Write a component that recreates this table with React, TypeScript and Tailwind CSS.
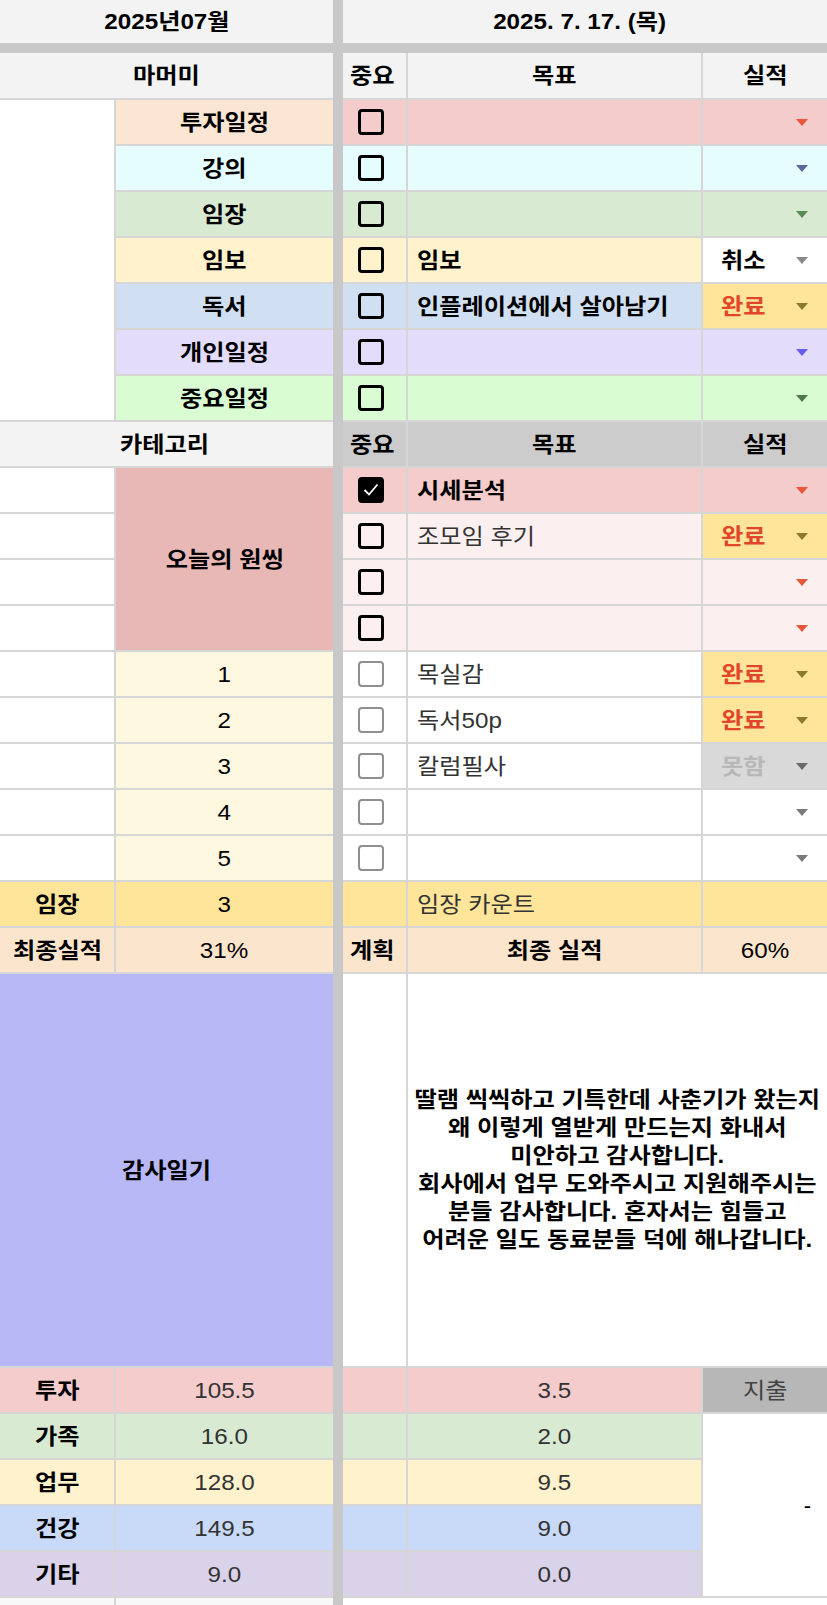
import React from "react";

const T = ({ children, left = false }: { children: React.ReactNode; left?: boolean }) => (
  <span className={left ? "inline-block scale-x-110 origin-left whitespace-nowrap" : "inline-block scale-x-110 whitespace-nowrap"}>
    {children}
  </span>
);

const Arrow = ({ c }: { c: string }) => (
  <svg width="12" height="7" viewBox="0 0 12 7" className="shrink-0">
    <path d="M0 0H12L6 7Z" fill={c} />
  </svg>
);

const Box = ({ checked = false, gray = false }: { checked?: boolean; gray?: boolean }) => (
  <div
    className={
      gray
        ? "w-[26px] h-[26px] rounded-[4px] border-[2.5px] border-[#8f8f8f] bg-white"
        : checked
        ? "w-[26px] h-[26px] rounded-[4px] border-[3px] border-black bg-black flex items-center justify-center"
        : "w-[26px] h-[26px] rounded-[4px] border-[3px] border-black"
    }
  >
    {checked && (
      <svg width="18" height="16" viewBox="0 0 18 16">
        <path d="M2.5 8 L7 12.5 L15.5 2.5" fill="none" stroke="white" strokeWidth="1.8" />
      </svg>
    )}
  </div>
);

type Res = { text: string; cls: string; bg: string } | null;

const topRows: { label: string; lbg: string; rbg: string; goal: string; res: Res; arrow: string }[] = [
  { label: "투자일정", lbg: "bg-[#fae6d3]", rbg: "bg-[#f4cccc]", goal: "", res: null, arrow: "#e8553a" },
  { label: "강의", lbg: "bg-[#e6fdff]", rbg: "bg-[#e6fdff]", goal: "", res: null, arrow: "#5b6796" },
  { label: "임장", lbg: "bg-[#d9ead3]", rbg: "bg-[#d9ead3]", goal: "", res: null, arrow: "#5a8a55" },
  {
    label: "임보",
    lbg: "bg-[#fff2cc]",
    rbg: "bg-[#fff2cc]",
    goal: "임보",
    res: { text: "취소", cls: "text-black font-bold", bg: "bg-white" },
    arrow: "#8a8a8a",
  },
  {
    label: "독서",
    lbg: "bg-[#d0e0f2]",
    rbg: "bg-[#d0e0f2]",
    goal: "인플레이션에서 살아남기",
    res: { text: "완료", cls: "text-[#e2452c] font-bold", bg: "bg-[#ffe599]" },
    arrow: "#8c7b2e",
  },
  { label: "개인일정", lbg: "bg-[#e3dcfb]", rbg: "bg-[#e3dcfb]", goal: "", res: null, arrow: "#6a5cf0" },
  { label: "중요일정", lbg: "bg-[#d9fcd2]", rbg: "bg-[#d9fcd2]", goal: "", res: null, arrow: "#4f7a4f" },
];

const oneRows: { bg: string; goal: string; bold: boolean; checked: boolean; res: Res; arrow: string }[] = [
  { bg: "bg-[#f4cccc]", goal: "시세분석", bold: true, checked: true, res: null, arrow: "#e8553a" },
  {
    bg: "bg-[#fcefef]",
    goal: "조모임 후기",
    bold: false,
    checked: false,
    res: { text: "완료", cls: "text-[#e2452c] font-bold", bg: "bg-[#ffe599]" },
    arrow: "#8c7b2e",
  },
  { bg: "bg-[#fcefef]", goal: "", bold: false, checked: false, res: null, arrow: "#e8553a" },
  { bg: "bg-[#fcefef]", goal: "", bold: false, checked: false, res: null, arrow: "#e8553a" },
];

const numRows: { n: string; goal: string; res: Res; arrow: string }[] = [
  { n: "1", goal: "목실감", res: { text: "완료", cls: "text-[#e2452c] font-bold", bg: "bg-[#ffe599]" }, arrow: "#8c7b2e" },
  { n: "2", goal: "독서50p", res: { text: "완료", cls: "text-[#e2452c] font-bold", bg: "bg-[#ffe599]" }, arrow: "#8c7b2e" },
  { n: "3", goal: "칼럼필사", res: { text: "못함", cls: "text-[#b8b8b8] font-bold", bg: "bg-[#d9d9d9]" }, arrow: "#6a6a6a" },
  { n: "4", goal: "", res: null, arrow: "#7a7a7a" },
  { n: "5", goal: "", res: null, arrow: "#7a7a7a" },
];

const stats: { label: string; bg: string; v: string; p: string }[] = [
  { label: "투자", bg: "bg-[#f4cccc]", v: "105.5", p: "3.5" },
  { label: "가족", bg: "bg-[#d9ead3]", v: "16.0", p: "2.0" },
  { label: "업무", bg: "bg-[#fff2cc]", v: "128.0", p: "9.5" },
  { label: "건강", bg: "bg-[#c9daf8]", v: "149.5", p: "9.0" },
  { label: "기타", bg: "bg-[#d9d2e9]", v: "9.0", p: "0.0" },
];

const ResCell = ({ res, arrow, bg }: { res: Res; arrow: string; bg: string }) => (
  <div className={`flex items-center justify-between pl-[18px] pr-[19px] ${res ? res.bg : bg}`}>
    <span className={res ? res.cls : ""}>{res ? <T left>{res.text}</T> : ""}</span>
    <Arrow c={arrow} />
  </div>
);

const ROWS = "grid-rows-[45px_repeat(19,44px)_392px_repeat(6,44px)]";

export default function App() {
  return (
    <div className="w-[827px] bg-[#c8c8c8] text-[22px] text-black font-['Liberation_Sans','Noto_Sans_CJK_KR',sans-serif] overflow-hidden">
      {/* Top header */}
      <div className="flex gap-[10px] pb-[10px]">
        <div className="w-[333px] h-[43px] bg-[#f3f3f3] flex items-center justify-center font-bold">
          <T>2025년07월</T>
        </div>
        <div className="w-[484px] h-[43px] bg-[#f3f3f3] flex items-center justify-center font-bold pr-[10px]">
          <T>2025. 7. 17. (목)</T>
        </div>
      </div>

      <div className="flex gap-[10px]">
        {/* Left grid */}
        <div className={`grid w-[333px] grid-cols-[114px_217px] gap-[2px] bg-[#d6d6d6] ${ROWS}`}>
          <div className="col-span-2 bg-[#f3f3f3] flex items-center justify-center font-bold">
            <T>마머미</T>
          </div>
          <div className="row-span-7 bg-white" />
          {topRows.map((r) => (
            <div key={r.label} className={`${r.lbg} flex items-center justify-center font-bold`}>
              <T>{r.label}</T>
            </div>
          ))}
          <div className="col-span-2 bg-[#f3f3f3] flex items-center pl-[120px] font-bold">
            <T left>카테고리</T>
          </div>
          <div className="bg-white" />
          <div className="row-span-4 bg-[#e8b8b7] flex items-center justify-center font-bold">
            <T>오늘의 원씽</T>
          </div>
          <div className="bg-white" />
          <div className="bg-white" />
          <div className="bg-white" />
          {numRows.map((r) => (
            <React.Fragment key={r.n}>
              <div className="bg-white" />
              <div className="bg-[#fff8e1] flex items-center justify-center">
                <T>{r.n}</T>
              </div>
            </React.Fragment>
          ))}
          <div className="bg-[#ffe599] flex items-center justify-center font-bold">
            <T>임장</T>
          </div>
          <div className="bg-[#ffe599] flex items-center justify-center">
            <T>3</T>
          </div>
          <div className="bg-[#fce5cd] flex items-center justify-center font-bold">
            <T>최종실적</T>
          </div>
          <div className="bg-[#fce5cd] flex items-center justify-center">
            <T>31%</T>
          </div>
          <div className="col-span-2 bg-[#b7b8f5] flex items-center justify-center font-bold">
            <T>감사일기</T>
          </div>
          {stats.map((s) => (
            <React.Fragment key={s.label}>
              <div className={`${s.bg} flex items-center justify-center font-bold`}>
                <T>{s.label}</T>
              </div>
              <div className={`${s.bg} flex items-center justify-center text-[#333]`}>
                <T>{s.v}</T>
              </div>
            </React.Fragment>
          ))}
          <div className="bg-[#f8f8f8]" />
          <div className="bg-[#f8f8f8]" />
        </div>

        {/* Right grid */}
        <div className={`grid w-[484px] grid-cols-[63px_293px_124px] gap-[2px] bg-[#d6d6d6] ${ROWS}`}>
          <div className="bg-[#f3f3f3] flex items-center justify-center font-bold pr-[4px]">
            <T>중요</T>
          </div>
          <div className="bg-[#f3f3f3] flex items-center justify-center font-bold">
            <T>목표</T>
          </div>
          <div className="bg-[#f3f3f3] flex items-center justify-center font-bold">
            <T>실적</T>
          </div>

          {topRows.map((r) => (
            <React.Fragment key={r.label}>
              <div className={`${r.rbg} flex items-center pl-[15px]`}>
                <Box />
              </div>
              <div className={`${r.rbg} flex items-center pl-[9px] font-bold`}>
                <T left>{r.goal}</T>
              </div>
              <ResCell res={r.res} arrow={r.arrow} bg={r.rbg} />
            </React.Fragment>
          ))}

          <div className="bg-[#cccccc] flex items-center justify-center font-bold pr-[4px]">
            <T>중요</T>
          </div>
          <div className="bg-[#cccccc] flex items-center justify-center font-bold">
            <T>목표</T>
          </div>
          <div className="bg-[#cccccc] flex items-center justify-center font-bold">
            <T>실적</T>
          </div>

          {oneRows.map((r, i) => (
            <React.Fragment key={i}>
              <div className={`${r.bg} flex items-center pl-[15px]`}>
                <Box checked={r.checked} />
              </div>
              <div className={`${r.bg} flex items-center pl-[9px] ${r.bold ? "font-bold" : "text-[#333]"}`}>
                <T left>{r.goal}</T>
              </div>
              <ResCell res={r.res} arrow={r.arrow} bg={r.bg} />
            </React.Fragment>
          ))}

          {numRows.map((r) => (
            <React.Fragment key={r.n}>
              <div className="bg-white flex items-center pl-[15px]">
                <Box gray />
              </div>
              <div className="bg-white flex items-center pl-[9px] text-[#333]">
                <T left>{r.goal}</T>
              </div>
              <ResCell res={r.res} arrow={r.arrow} bg="bg-white" />
            </React.Fragment>
          ))}

          <div className="bg-[#ffe599]" />
          <div className="bg-[#ffe599] flex items-center pl-[9px] text-[#333]">
            <T left>임장 카운트</T>
          </div>
          <div className="bg-[#ffe599]" />

          <div className="bg-[#fce5cd] flex items-center justify-center font-bold pr-[4px]">
            <T>계획</T>
          </div>
          <div className="bg-[#fce5cd] flex items-center justify-center font-bold">
            <T>최종 실적</T>
          </div>
          <div className="bg-[#fce5cd] flex items-center justify-center">
            <T>60%</T>
          </div>

          <div className="bg-white" />
          <div className="col-span-2 bg-white flex items-center justify-center text-center font-bold leading-[28px]">
            <p className="scale-x-110">
              딸램 씩씩하고 기특한데 사춘기가 왔는지
              <br />
              왜 이렇게 열받게 만드는지 화내서
              <br />
              미안하고 감사합니다.
              <br />
              회사에서 업무 도와주시고 지원해주시는
              <br />
              분들 감사합니다. 혼자서는 힘들고
              <br />
              어려운 일도 동료분들 덕에 해나갑니다.
            </p>
          </div>

          {stats.map((s, i) => (
            <React.Fragment key={s.label}>
              <div className={s.bg} />
              <div className={`${s.bg} flex items-center justify-center text-[#333]`}>
                <T>{s.p}</T>
              </div>
              {i === 0 && (
                <div className="bg-[#b7b7b7] flex items-center justify-center text-[#444]">
                  <T>지출</T>
                </div>
              )}
              {i === 1 && (
                <div className="row-span-4 bg-white flex items-center justify-end pr-[16px]">-</div>
              )}
            </React.Fragment>
          ))}

          <div className="col-span-3 bg-white" />
        </div>
      </div>
    </div>
  );
}
